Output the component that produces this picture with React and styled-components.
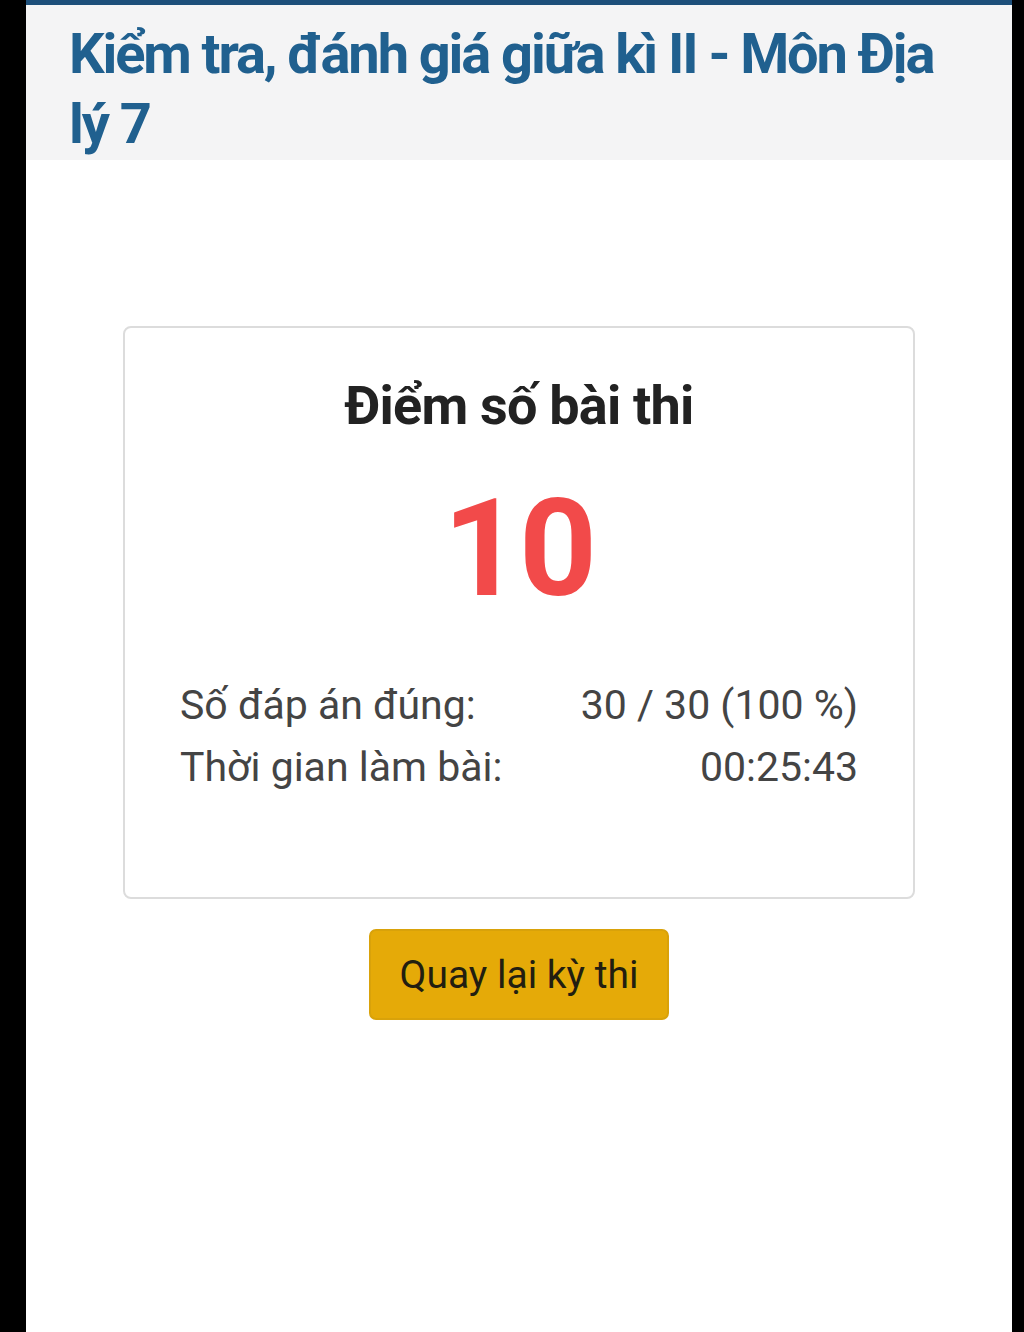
import styled, { createGlobalStyle } from "styled-components";

const GlobalStyle = createGlobalStyle`
  html, body {
    margin: 0;
    padding: 0;
    background: #000;
  }
  body {
    font-family: Roboto, "Noto Sans", "Liberation Sans", sans-serif;
  }
`;

const Screen = styled.div`
  display: flex;
  min-height: 1332px;
  padding: 0 12px 0 26px;
  background: #000;
`;

const Page = styled.div`
  flex: 1;
  display: flex;
  flex-direction: column;
  background: #fff;
  border-top: 5px solid #1d4f7a;
`;

const Header = styled.header`
  background: #f4f4f5;
  padding: 14px 40px 1px 43px;
`;

const Title = styled.h1`
  margin: 0;
  font-size: 56px;
  line-height: 70px;
  font-weight: 700;
  letter-spacing: -2.1px;
  color: #20608f;
`;

const Content = styled.main`
  display: flex;
  flex-direction: column;
  align-items: center;
  padding-top: 166px;
`;

const Card = styled.section`
  width: 792px;
  box-sizing: border-box;
  border: 2px solid #dcdcdc;
  border-radius: 8px;
  padding: 46px 55px 107px;
  display: flex;
  flex-direction: column;
  align-items: center;
`;

const CardTitle = styled.h2`
  margin: 0;
  font-size: 54px;
  line-height: 64px;
  font-weight: 700;
  letter-spacing: -0.8px;
  color: #222;
`;

const Score = styled.div`
  margin-top: 41px;
  font-size: 136px;
  line-height: 140px;
  font-weight: 700;
  letter-spacing: -2px;
  color: #f24a4a;
`;

const Stats = styled.div`
  width: 100%;
  margin-top: 63px;
  display: flex;
  flex-direction: column;
  gap: 16px;
`;

const StatRow = styled.div`
  display: flex;
  justify-content: space-between;
  font-size: 41px;
  line-height: 46px;
  color: #444;
`;

const BackButton = styled.button`
  margin-top: 30px;
  width: 300px;
  height: 91px;
  border: 2px solid #d9a20a;
  border-radius: 7px;
  background: #e5aa08;
  color: #221e10;
  font-family: inherit;
  font-size: 39px;
  cursor: pointer;
`;

const stats = [
  { label: "Số đáp án đúng:", value: "30 / 30 (100 %)" },
  { label: "Thời gian làm bài:", value: "00:25:43" },
];

export default function App() {
  return (
    <>
      <GlobalStyle />
      <Screen>
        <Page>
          <Header>
            <Title>Kiểm tra, đánh giá giữa kì II - Môn Địa lý 7</Title>
          </Header>
          <Content>
            <Card>
              <CardTitle>Điểm số bài thi</CardTitle>
              <Score>10</Score>
              <Stats>
                {stats.map((s) => (
                  <StatRow key={s.label}>
                    <span>{s.label}</span>
                    <span>{s.value}</span>
                  </StatRow>
                ))}
              </Stats>
            </Card>
            <BackButton>Quay lại kỳ thi</BackButton>
          </Content>
        </Page>
      </Screen>
    </>
  );
}
